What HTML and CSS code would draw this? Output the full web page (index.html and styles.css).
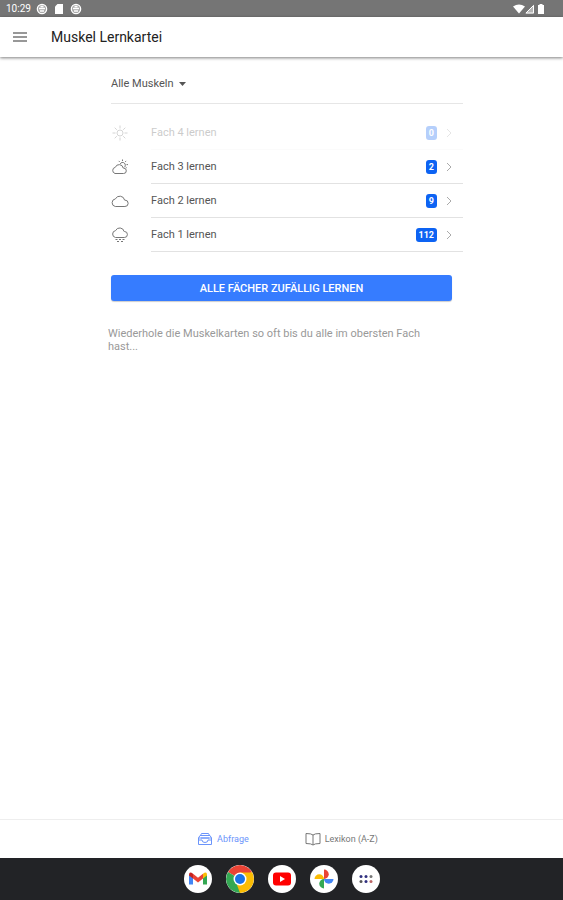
FILE: index.html
```html
<!DOCTYPE html>
<html lang="de">
<head>
  <meta charset="UTF-8">
  <title>Muskel Lernkartei</title>
  <meta name="viewport" content="width=device-width, initial-scale=1.0">
  <link rel="stylesheet" href="styles.css">
</head>
<body>

  <div class="statusbar">
    <span class="clock">10:29</span>
    <svg class="status-icon" viewBox="0 0 12 12"><circle cx="6" cy="6" r="4.7" fill="#aaa" stroke="#fff" stroke-width="1.2"/><path d="M3 5.5h6M4 8h4M4.5 3.5h3" stroke="#fff" stroke-width="1.3"/></svg>
    <svg class="status-icon" viewBox="0 0 12 12"><path d="M4.5 1H10v10H2V3.5z" fill="#fff"/></svg>
    <svg class="status-icon" viewBox="0 0 12 12"><circle cx="6" cy="6" r="4.7" fill="#aaa" stroke="#fff" stroke-width="1.2"/><path d="M3 5.5h6M4 8h4M4.5 3.5h3" stroke="#fff" stroke-width="1.3"/></svg>
    <svg class="signals" viewBox="0 0 34 12"><path d="M0 3.5Q6 -.5 12 3.5L6 10.5z" fill="#fff"/><path d="M21 1.5v9h-9z" fill="#b5b5b5"/><path d="M20.5 2.5v7.500h-7.500z" fill="none" stroke="#fff"/><path d="M25 2h1.500V1h3v1H31v9h-6z" fill="#fff"/></svg>
  </div>

  <header class="toolbar">
    <button class="menu-button" type="button" aria-label="Menü">
      <svg viewBox="0 0 14 10"><path d="M0 1h14M0 5h14M0 9h14" stroke="#777" stroke-width="1.3"/></svg>
    </button>
    <h1>Muskel Lernkartei</h1>
  </header>

  <main class="content">
    <div class="filter">
      <select class="filter-select" aria-label="Muskelgruppe">
        <option>Alle Muskeln</option>
      </select>
      <svg class="caret" viewBox="0 0 7 4"><path d="M0 0h7L3.500 4z" fill="#555"/></svg>
    </div>

    <ul class="boxes">
      <li>
        <button class="box" type="button" disabled>
          <svg class="weather" viewBox="0 0 18 18"><circle cx="9" cy="9" r="3"/><path d="M9 1.500v3M9 13.500v3M1.500 9h3M13.500 9h3M3.700 3.700l2.100 2.100M12.200 12.200l2.100 2.100M3.700 14.300l2.100-2.100M12.200 5.800l2.100-2.100"/></svg>
          <span class="box-inner"><span class="box-name">Fach 4 lernen</span><span class="badge">0</span><svg class="chevron" viewBox="0 0 6 10"><path d="M1 1l4 4-4 4"/></svg></span>
        </button>
      </li>
      <li>
        <button class="box" type="button">
          <svg class="weather" viewBox="0 0 18 18"><path d="M4 15.500h8.500a2.700 2.700 0 0 0 .2-5.400h-.5A4.100 4.100 0 0 0 4.300 9.300 3.200 3.200 0 0 0 4 15.500z"/><path d="M9.200 5.900a2.700 2.700 0 1 1 4 3.400M11.500 1.500v1.500M7.700 2.900l1 1M15.200 2.900l-1 1M17 6.600h-1.500M15.700 9.900l-1-.8"/></svg>
          <span class="box-inner"><span class="box-name">Fach 3 lernen</span><span class="badge">2</span><svg class="chevron" viewBox="0 0 6 10"><path d="M1 1l4 4-4 4"/></svg></span>
        </button>
      </li>
      <li>
        <button class="box" type="button">
          <svg class="weather" viewBox="0 0 18 18"><path d="M4.300 14.500h9.600a3.200 3.200 0 0 0 .1-6.400h-.4A4.900 4.900 0 0 0 4.400 6.900 3.850 3.850 0 0 0 4.300 14.500z"/></svg>
          <span class="box-inner"><span class="box-name">Fach 2 lernen</span><span class="badge">9</span><svg class="chevron" viewBox="0 0 6 10"><path d="M1 1l4 4-4 4"/></svg></span>
        </button>
      </li>
      <li>
        <button class="box" type="button">
          <svg class="weather" viewBox="0 0 18 18"><path d="M4.500 11.500h8.800a3 3 0 0 0 .2-6h-.4a4.500 4.500 0 0 0-8.500-.9A3.500 3.500 0 0 0 4.500 11.500z"/><path d="M4.500 13.500h2M8 13.500h2M11.500 13.500h2M6 15.500h2M10 15.500h2"/></svg>
          <span class="box-inner"><span class="box-name">Fach 1 lernen</span><span class="badge">112</span><svg class="chevron" viewBox="0 0 6 10"><path d="M1 1l4 4-4 4"/></svg></span>
        </button>
      </li>
    </ul>

    <button class="learn-all" type="button">ALLE FÄCHER ZUFÄLLIG LERNEN</button>

    <p class="hint">Wiederhole die Muskelkarten so oft bis du alle im obersten Fach hast...</p>
  </main>

  <nav class="tabs">
    <a class="tab active" href="#abfrage">
      <svg viewBox="0 0 16 14"><path d="M1.500 6v6.500h13V6zM1.500 6l1.500-2.500h10L14.500 6M3.500 3.500l1-2h7l1 2M1.500 8h3.500q0 2.500 3 2.500T11 8h3.500M4 6h8"/></svg>
      Abfrage
    </a>
    <a class="tab" href="#lexikon">
      <svg viewBox="0 0 16 14"><path d="M8 3Q6.500 1.500 1 1.500v10q5.500 0 7 1.500 1.500-1.500 7-1.500v-10Q9.500 1.500 8 3zv10"/></svg>
      Lexikon (A-Z)
    </a>
  </nav>

  <div class="dock">
    <a class="app" href="#gmail" aria-label="Gmail">
      <svg viewBox="0 0 28 28"><path d="M5 9.500v10h4v-7z" fill="#4285f4"/><path d="M23 9.500v10h-4v-7z" fill="#34a853"/><path d="M9 8.700l5 4 5-4v4.800l-5 4-5-4z" fill="#ea4335"/><path d="M5 10Q5 6 9 8.700v4.800l-4-3z" fill="#c5221f"/><path d="M23 10q0-4-4-1.300v4.800l4-3z" fill="#fbbc04"/></svg>
    </a>
    <a class="app" href="#chrome" aria-label="Chrome">
      <svg viewBox="0 0 28 28"><path d="M14 14L1.900 7A14 14 0 0 1 26.100 7z" fill="#ea4335"/><path d="M14 14L26.100 7A14 14 0 0 1 14 28z" fill="#fbbc04"/><path d="M14 14v14A14 14 0 0 1 1.900 7z" fill="#34a853"/><path d="M14 7.500h12.400L19.600 17.200z" fill="#fbbc04"/><path d="M19.600 17.200L14 28l-3-8z" fill="#fbbc04"/><circle cx="14" cy="14" r="6.500" fill="#fff"/><circle cx="14" cy="14" r="5" fill="#1a73e8"/></svg>
    </a>
    <a class="app" href="#youtube" aria-label="YouTube">
      <svg viewBox="0 0 28 28"><rect x="5" y="7.500" width="18" height="13" rx="3" fill="#f00"/><path d="M12 11l5 3-5 3z" fill="#fff"/></svg>
    </a>
    <a class="app" href="#fotos" aria-label="Fotos">
      <svg viewBox="0 0 28 28"><path d="M14 14V4.500a4.700 4.700 0 0 1 0 9.500z" fill="#ea4335"/><path d="M14 14h9.500a4.700 4.700 0 0 1-9.500 0z" fill="#4285f4"/><path d="M14 14v9.500a4.700 4.700 0 0 1 0-9.500z" fill="#34a853"/><path d="M14 14H4.500a4.700 4.700 0 0 1 9.500 0z" fill="#fbbc04"/></svg>
    </a>
    <a class="app" href="#apps" aria-label="Alle Apps">
      <svg viewBox="0 0 28 28"><g fill="#303080"><circle cx="9" cy="11.500" r="1.500"/><circle cx="14" cy="11.500" r="1.500"/><circle cx="19" cy="11.500" r="1.500" fill="#777"/><circle cx="9" cy="16.500" r="1.500" fill="#555"/><circle cx="14" cy="16.500" r="1.500"/><circle cx="19" cy="16.500" r="1.500" fill="#b66"/></g></svg>
    </a>
  </div>

</body>
</html>
```
FILE: styles.css
```css
* {
  box-sizing: border-box;
}

body {
  margin: 0;
  min-height: 100vh;
  display: flex;
  flex-direction: column;
  background-color: #ffffff;
  color: #555;
  font-family: Roboto, "Liberation Sans", sans-serif;
  font-size: 11px;
}

button, select {
  font: inherit;
  color: inherit;
  background: none;
  border: none;
  padding: 0;
}

svg {
  display: block;
  flex: none;
}

a {
  text-decoration: none;
}

.statusbar {
  height: 17px;
  padding: 0 16px 0 6px;
  display: flex;
  align-items: center;
  gap: 5px;
  background-color: #757575;
  color: #fff;
}

.clock {
  font-size: 10px;
}

.status-icon {
  width: 12px;
  height: 12px;
}

.signals {
  width: 34px;
  height: 12px;
  margin-left: auto;
}

.toolbar {
  height: 40px;
  padding: 0 13px;
  display: flex;
  align-items: center;
  gap: 24px;
  box-shadow: 0 1px 3px rgba(0, 0, 0, 0.5);
}

.toolbar h1 {
  margin: 0;
  font-size: 14px;
  font-weight: 400;
  color: #222;
}

.menu-button svg {
  width: 14px;
  height: 10px;
}

.content {
  flex: 1;
  width: 100%;
  max-width: 363px;
  margin: 0 auto;
  padding-top: 7px;
}

.filter {
  height: 40px;
  margin-left: 11px;
  display: flex;
  align-items: center;
  gap: 5px;
  border-bottom: 1px solid #e6e6e6;
}

.filter-select {
  appearance: none;
}

.caret {
  width: 7px;
  height: 4px;
}

.boxes {
  list-style: none;
  margin: 12px 0 23px 11px;
  padding: 0;
}

.box {
  width: 100%;
  height: 34px;
  display: flex;
  align-items: center;
  gap: 22px;
  text-align: left;
  cursor: pointer;
}

.box:disabled {
  opacity: 0.3;
  color: inherit;
  cursor: default;
}

.weather {
  width: 18px;
  height: 18px;
  fill: none;
  stroke: #777;
}

.box-inner {
  flex: 1;
  height: 100%;
  padding-right: 11px;
  display: flex;
  align-items: center;
  border-bottom: 1px solid #e2e2e2;
}

.box:disabled .box-inner {
  border-color: #f2f2f2;
}

.box-name {
  flex: 1;
}

.badge {
  padding: 0 3px;
  border-radius: 3px;
  background-color: #0d63f3;
  color: #fff;
  font-size: 9px;
  font-weight: 700;
  line-height: 14px;
  text-align: center;
}

.chevron {
  width: 6px;
  height: 10px;
  margin-left: 9px;
  fill: none;
  stroke: #aaa;
}

.learn-all {
  display: block;
  width: calc(100% - 22px);
  height: 26px;
  margin: 0 11px;
  border-radius: 3px;
  background-color: #367cff;
  box-shadow: 0 1px 1px rgba(0, 0, 0, 0.2);
  color: #fff;
  font-size: 11px;
  font-weight: 500;
  cursor: pointer;
}

.hint {
  margin: 26px 22px 0 8px;
  color: #999;
  line-height: 13px;
}

.tabs {
  height: 39px;
  padding-left: 12px;
  display: flex;
  justify-content: center;
  gap: 56px;
  border-top: 1px solid #eee;
}

.tab {
  display: flex;
  align-items: center;
  gap: 4px;
  color: #777;
  font-size: 9px;
}

.tab svg {
  width: 16px;
  height: 14px;
  fill: none;
  stroke: currentColor;
}

.tab.active {
  color: #6b94fb;
}

.dock {
  height: 42px;
  display: flex;
  align-items: center;
  justify-content: center;
  gap: 14px;
  background-color: #222326;
}

.app {
  width: 28px;
  height: 28px;
  border-radius: 50%;
  background-color: #fff;
  overflow: hidden;
}
```
